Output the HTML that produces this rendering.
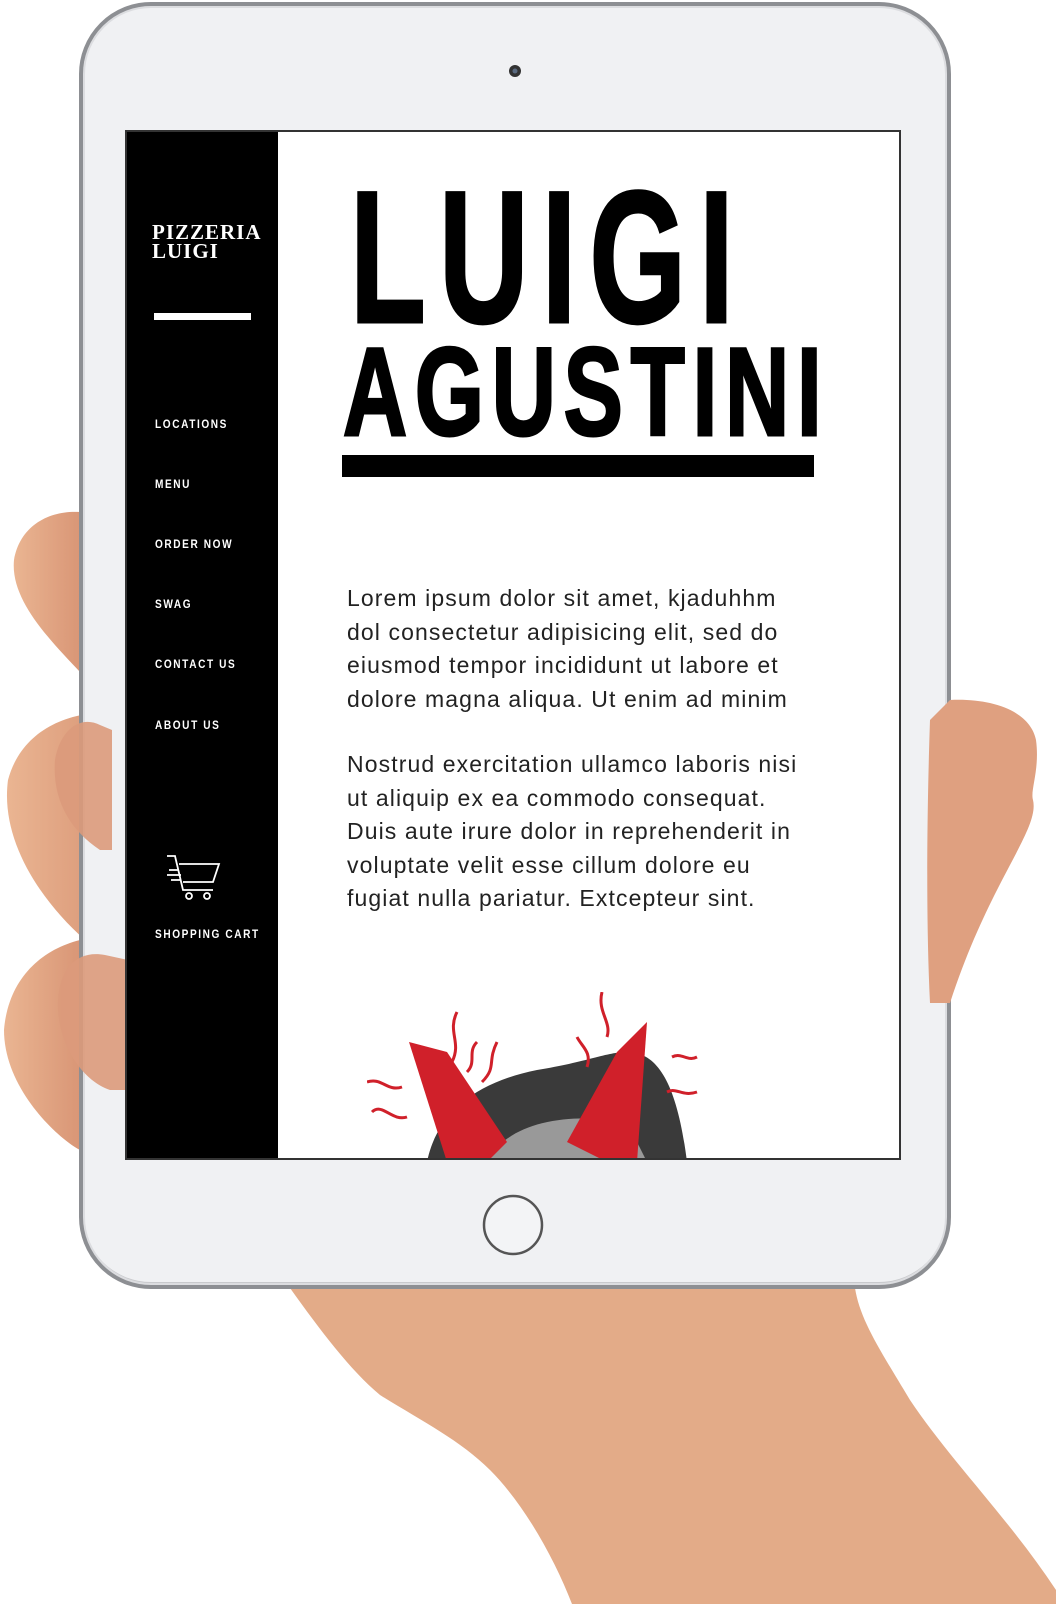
<!DOCTYPE html>
<html><head><meta charset="utf-8"><style>
*{margin:0;padding:0;box-sizing:border-box}
body{width:1056px;height:1604px;background:#fff;position:relative;overflow:hidden;font-family:"Liberation Sans",sans-serif}
.abs{position:absolute}
.tablet{left:79px;top:2px;width:872px;height:1287px;border-radius:72px;background:#f0f1f3;border:4px solid #8d8f93;box-shadow:inset 0 0 0 2px #dcdde0,inset 0 -3px 0 #c9cacd}
.screen{left:125px;top:130px;width:776px;height:1030px;background:#fff;border:2px solid #333;overflow:hidden}
.side{left:0;top:0;width:151px;height:100%;background:#000}
.nav{position:absolute;left:28px;color:#fff;font-weight:bold;font-size:12px;letter-spacing:1.9px;white-space:nowrap;transform:scaleX(.84);transform-origin:0 0}
.brand{position:absolute;left:25px;top:91px;color:#fff;font-family:"Liberation Serif",serif;font-weight:bold;font-size:21px;line-height:19px;letter-spacing:1px}
.t{position:absolute;font-weight:bold;color:#000;transform-origin:0 0;white-space:nowrap;line-height:1;-webkit-text-stroke:3px #000}
.p{position:absolute;left:220px;font-size:23px;line-height:33.5px;color:#222;letter-spacing:1.1px;white-space:nowrap}
</style></head><body>
<svg class="abs" style="left:0;top:0" width="1056" height="1604">
<defs><linearGradient id="g1" x1="0" y1="0" x2="1" y2="0"><stop offset="0" stop-color="#eab592"/><stop offset="1" stop-color="#d99676"/></linearGradient></defs>
<path d="M290 1288 C320 1330 350 1370 380 1395 C420 1420 460 1440 490 1470 C525 1505 555 1560 572 1604 L1056 1604 L1056 1590 C1010 1520 950 1460 910 1400 C880 1350 860 1320 855 1288 Z" fill="#e3ab88"/>
<path d="M80 512 C50 510 20 525 14 560 C10 600 50 640 80 672 Z" fill="url(#g1)"/>
<path d="M112 712 C60 712 20 735 8 780 C0 840 40 900 85 940 L112 940 Z" fill="url(#g1)"/>
<path d="M80 940 C40 950 8 980 4 1030 C4 1090 60 1140 80 1150 Z" fill="url(#g1)"/>
</svg>
<div class="abs tablet"></div>
<svg class="abs" style="left:0;top:0" width="1056" height="1604">
<path d="M100 725 C80 715 60 730 55 760 C52 800 70 830 100 850 L112 850 L112 730 Z" fill="#dc9a7b" opacity=".9"/>
<path d="M105 955 C80 950 60 965 58 1000 C56 1040 80 1080 110 1090 L128 1090 L128 960 Z" fill="#dc9a7b" opacity=".9"/>
<path d="M950 700 C990 698 1030 710 1036 740 C1040 770 1030 790 1033 800 C1040 830 990 880 950 1003 L930 1003 C925 900 928 780 930 720 Z" fill="#dfa080"/>
<circle cx="515" cy="71" r="6" fill="#333"/><circle cx="515" cy="71" r="2.5" fill="#5a6a80"/>
<circle cx="513" cy="1225" r="29" fill="#f3f4f6" stroke="#555" stroke-width="2.5"/>
</svg>
<div class="abs screen">
 <div class="abs side">
  <div class="brand">PIZZERIA<br>LUIGI</div>
  <div class="abs" style="left:27px;top:181px;width:97px;height:7px;background:#fff"></div>
  <div class="nav" style="top:285px">LOCATIONS</div>
  <div class="nav" style="top:345px">MENU</div>
  <div class="nav" style="top:405px">ORDER NOW</div>
  <div class="nav" style="top:465px">SWAG</div>
  <div class="nav" style="top:525px">CONTACT US</div>
  <div class="nav" style="top:586px">ABOUT US</div>
  <svg class="abs" style="left:38px;top:722px" width="56" height="48" fill="none" stroke="#fff" stroke-width="1.8">
   <path d="M2 2 H10 L18 36 H48"/><path d="M14 10 H54 L48 28 H18"/><path d="M4 16 H14 M2 21 H16 M6 26 H16"/>
   <circle cx="24" cy="42" r="3"/><circle cx="42" cy="42" r="3"/></svg>
  <div class="nav" style="top:795px">SHOPPING CART</div>
 </div>
 <div class="t" style="left:223px;top:31px;font-size:188px;letter-spacing:20px;transform:scaleX(.66)">LUIGI</div>
 <div class="t" style="left:216px;top:198px;font-size:125px;letter-spacing:11px;transform:scaleX(.71)">AGUSTINI</div>
 <div class="abs" style="left:215px;top:323px;width:472px;height:22px;background:#000"></div>
 <div class="p" style="top:450px">Lorem ipsum dolor sit amet, kjaduhhm<br>dol consectetur adipisicing elit, sed do<br>eiusmod tempor incididunt ut labore et<br>dolore magna aliqua. Ut enim ad minim</div>
 <div class="p" style="top:616px">Nostrud exercitation ullamco laboris nisi<br>ut aliquip ex ea commodo consequat.<br>Duis aute irure dolor in reprehenderit in<br>voluptate velit esse cillum dolore eu<br>fugiat nulla pariatur. Extcepteur sint.</div>
 <svg class="abs" style="left:240px;top:860px" width="360" height="170">
  <path d="M60 170 C70 120 110 90 170 78 C220 70 240 60 260 60 C290 60 310 90 320 170 Z" fill="#3a3a3a"/>
  <path d="M120 170 C140 130 200 120 260 130 L280 170 Z" fill="#999"/>
  <path d="M42 50 L80 60 L140 150 L120 170 L80 170 Z" fill="#d0202a"/>
  <path d="M280 30 L250 60 L200 150 L240 170 L270 170 Z" fill="#d0202a"/>
  <g stroke="#d0202a" stroke-width="3" fill="none">
   <path d="M90 20 C80 40 95 50 85 70"/><path d="M110 50 C100 60 110 70 100 80"/><path d="M130 50 C120 70 130 75 115 90"/>
   <path d="M0 90 C15 85 20 100 35 95"/><path d="M5 120 C15 110 25 130 40 125"/><path d="M235 0 C230 20 245 30 240 45"/>
   <path d="M210 45 C215 55 225 60 220 75"/><path d="M305 65 C315 60 320 70 330 65"/><path d="M300 100 C310 95 315 105 330 100"/>
  </g>
 </svg>
</div>
</body></html>
